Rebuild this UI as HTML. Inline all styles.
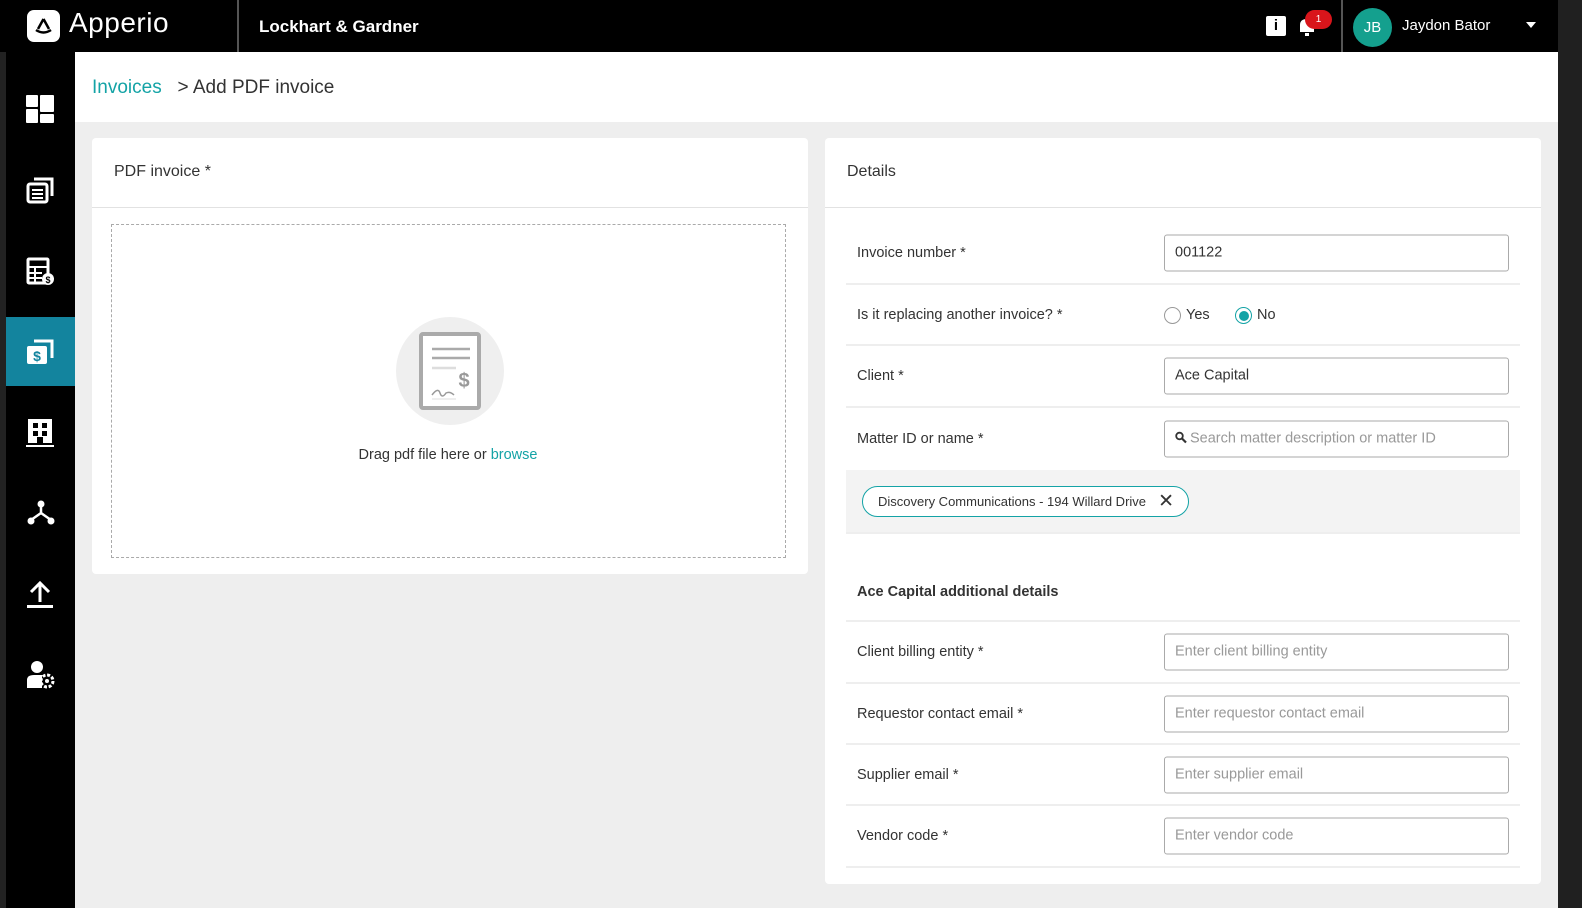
<!DOCTYPE html>
<html><head><style>
*{box-sizing:border-box;margin:0;padding:0}
body{width:1582px;height:908px;overflow:hidden;background:#202020;font-family:"Liberation Sans",sans-serif;color:#333;position:relative}
.top{position:absolute;left:0;top:0;width:1558px;height:52px;background:#000}
.side{position:absolute;left:6px;top:52px;width:69px;height:856px;background:#000}
.lstrip{position:absolute;left:0;top:0;width:6px;height:908px;background:#222}
.main{position:absolute;left:75px;top:52px;width:1483px;height:856px;background:#eee}
.hdr{position:absolute;left:0;top:0;width:1483px;height:70px;background:#fff}
.card{position:absolute;background:#fff;border-radius:4px}
.ch{height:70px;border-bottom:1px solid #e2e2e2;padding:25px 22px;font-size:16px;color:#333}
.row{position:absolute;left:21px;width:674px;border-bottom:2px solid #eee;font-size:14.5px;color:#333}
.row .l{position:absolute;left:11px;top:50%;transform:translateY(-50%)}
.inp{position:absolute;left:318px;width:345px;height:37px;border:1px solid #aaa;border-radius:3px;top:50%;transform:translateY(-50%);padding:9px 10px;font-size:14.5px;color:#333}
.ph{color:#999}
.ic{position:absolute;left:20px}
</style></head><body>
<div class="lstrip"></div>
<div class="top">
 <div style="position:absolute;left:27px;top:10px;width:33px;height:32px;background:#fff;border-radius:7px">
  <svg width="33" height="32" viewBox="0 0 33 32"><path d="M16.5 9 L11 19 M16.5 9 L22 19" stroke="#000" stroke-width="2.5" fill="none"/><path d="M9 20 Q16.5 25 24 20" stroke="#000" stroke-width="2.5" fill="none"/></svg>
 </div>
 <div style="position:absolute;left:69px;top:7px;color:#fff;font-size:28px;letter-spacing:0.5px">Apperio</div>
 <div style="position:absolute;left:237px;top:0;width:2px;height:52px;background:#555"></div>
 <div style="position:absolute;left:259px;top:17px;color:#fff;font-size:17px;font-weight:bold">Lockhart &amp; Gardner</div>
 <div style="position:absolute;left:1266px;top:16px;width:20px;height:20px;background:#fff;border-radius:2px;color:#000;font-weight:bold;font-size:15px;text-align:center;line-height:20px">i</div>
 <svg style="position:absolute;left:1297px;top:16px" width="20" height="22" viewBox="0 0 20 22"><path d="M3 16 L3 9 Q3 3 10 3 Q17 3 17 9 L17 16 Z" fill="#fff"/><rect x="8" y="17" width="4" height="3" fill="#fff"/></svg>
 <div style="position:absolute;left:1305px;top:10px;width:27px;height:19px;border-radius:10px;background:#d9151b;color:#fff;font-size:10px;text-align:center;line-height:19px">1</div>
 <div style="position:absolute;left:1341px;top:0;width:2px;height:52px;background:#555"></div>
 <div style="position:absolute;left:1353px;top:8px;width:39px;height:39px;border-radius:50%;background:#14a08e;color:#fff;font-size:15px;text-align:center;line-height:39px">JB</div>
 <div style="position:absolute;left:1402px;top:17px;color:#fff;font-size:15px">Jaydon Bator</div>
 <div style="position:absolute;left:1526px;top:22px;border-left:5px solid transparent;border-right:5px solid transparent;border-top:6px solid #fff"></div>
</div>
<div class="side">
 <svg class="ic" style="top:43px" width="28" height="28" viewBox="0 0 28 28"><rect x="0" y="0" width="12" height="12" rx="1" fill="#fff"/><rect x="14" y="0" width="14" height="17" rx="1" fill="#fff"/><rect x="0" y="14" width="12" height="14" rx="1" fill="#fff"/><rect x="14" y="19" width="14" height="9" rx="1" fill="#fff"/></svg>
 <svg class="ic" style="top:124px" width="28" height="28" viewBox="0 0 28 28"><path d="M8 3 H26 V20" stroke="#fff" stroke-width="3" fill="none"/><rect x="2" y="8" width="19" height="18" rx="2" fill="none" stroke="#fff" stroke-width="3"/><path d="M6 14H17M6 18H17M6 22H17" stroke="#fff" stroke-width="2"/></svg>
 <svg class="ic" style="top:205px" width="30" height="30" viewBox="0 0 30 30"><rect x="2" y="2" width="20" height="24" rx="1" fill="none" stroke="#fff" stroke-width="3"/><path d="M2 10H22M2 16H16M2 21H16M9 10V26" stroke="#fff" stroke-width="2"/><circle cx="22" cy="22" r="6" fill="#fff"/><text x="22" y="26" font-size="9" font-weight="bold" text-anchor="middle" fill="#000">$</text></svg>
 <div style="position:absolute;left:0;top:265px;width:69px;height:69px;background:#13849e"></div>
 <svg class="ic" style="top:286px" width="28" height="28" viewBox="0 0 28 28"><path d="M8 3 H26 V20" stroke="#fff" stroke-width="3" fill="none"/><rect x="1" y="8" width="20" height="18" rx="2" fill="#fff"/><text x="11" y="23" font-size="14" font-weight="bold" text-anchor="middle" fill="#13849e">$</text></svg>
 <svg class="ic" style="top:366px" width="28" height="30" viewBox="0 0 28 30"><rect x="2" y="1" width="24" height="24" fill="#fff"/><rect x="7" y="5" width="5" height="5" fill="#000"/><rect x="16" y="5" width="5" height="5" fill="#000"/><rect x="7" y="13" width="5" height="5" fill="#000"/><rect x="16" y="13" width="5" height="5" fill="#000"/><rect x="11" y="19" width="6" height="6" fill="#000"/><rect x="0" y="27" width="28" height="2" fill="#fff"/></svg>
 <svg class="ic" style="top:447px" width="30" height="30" viewBox="0 0 30 30"><path d="M15 6 V14 L5 21 M15 14 L25 21" stroke="#fff" stroke-width="2.5" fill="none"/><circle cx="15" cy="5" r="3.5" fill="#fff"/><circle cx="5" cy="22" r="3.5" fill="#fff"/><circle cx="25" cy="22" r="3.5" fill="#fff"/></svg>
 <svg class="ic" style="top:528px" width="28" height="30" viewBox="0 0 28 30"><path d="M14 22 V4 M5 12 L14 3 L23 12" stroke="#fff" stroke-width="3" fill="none"/><rect x="1" y="25" width="26" height="3" fill="#fff"/></svg>
 <svg class="ic" style="top:608px" width="30" height="30" viewBox="0 0 30 30"><circle cx="11" cy="7" r="6" fill="#fff"/><path d="M1 28 V20 Q1 15 8 15 H16 V28 Z" fill="#fff"/><circle cx="21" cy="21" r="6" fill="none" stroke="#fff" stroke-width="3" stroke-dasharray="3 1.7"/><circle cx="21" cy="21" r="2" fill="#fff"/></svg>
</div>
<div class="main">
 <div class="hdr"><div style="position:absolute;left:17px;top:25px;font-size:19px"><span style="color:#14a3a6">Invoices</span><span style="color:#333">&nbsp;&nbsp; &gt; Add PDF invoice</span></div></div>
 <div class="card" style="left:17px;top:86px;width:716px;height:436px">
  <div class="ch">PDF invoice *</div>
  <div style="position:absolute;left:19px;top:86px;width:675px;height:334px;border:1.5px dashed #aaa">
   <div style="position:absolute;left:284px;top:92px;width:108px;height:108px;border-radius:50%;background:#efefef"></div>
   <svg style="position:absolute;left:306px;top:106px" width="64" height="80" viewBox="0 0 64 80"><rect x="3" y="3" width="58" height="74" rx="2" fill="#fff" stroke="#aaa" stroke-width="4"/><path d="M14 18H52M14 27H52" stroke="#aaa" stroke-width="2.5"/><path d="M14 37H38" stroke="#ddd" stroke-width="2.5"/><text x="46" y="56" font-size="20" font-weight="bold" text-anchor="middle" fill="#999">$</text><path d="M14 64 Q20 56 22 62 Q24 68 28 62 Q32 60 36 64" stroke="#999" stroke-width="1.5" fill="none"/><path d="M14 68H38" stroke="#ddd" stroke-width="1"/></svg>
   <div style="position:absolute;left:0;width:672px;top:222px;text-align:center;font-size:14.5px">Drag pdf file here or <span style="color:#14a3a6">browse</span></div>
  </div>
 </div>
 <div class="card" style="left:750px;top:86px;width:716px;height:746px">
  <div class="ch">Details</div>
  <div class="row" style="top:84px;height:63px"><span class="l">Invoice number *</span><div class="inp">001122</div></div>
  <div class="row" style="top:147px;height:61px"><span class="l">Is it replacing another invoice? *</span>
   <div style="position:absolute;left:318px;top:22px;width:17px;height:17px;border:1px solid #999;border-radius:50%"></div>
   <span style="position:absolute;left:340px;top:22px">Yes</span>
   <div style="position:absolute;left:389px;top:22px;width:17px;height:17px;border:1.5px solid #14a3a6;border-radius:50%;padding:2.5px"><div style="width:100%;height:100%;border-radius:50%;background:#14a3a6"></div></div>
   <span style="position:absolute;left:411px;top:22px">No</span></div>
  <div class="row" style="top:208px;height:62px"><span class="l">Client *</span><div class="inp">Ace Capital</div></div>
  <div class="row" style="top:270px;height:62px;border:none"><span class="l">Matter ID or name *</span><div class="inp ph"><svg width="12" height="12" viewBox="0 0 12 12" style="vertical-align:-1px;margin-right:3px"><circle cx="4.5" cy="4.5" r="3.3" stroke="#333" stroke-width="1.8" fill="none"/><path d="M7 7L11 11" stroke="#333" stroke-width="2.2"/></svg>Search matter description or matter ID</div></div>
  <div style="position:absolute;left:21px;top:332px;width:674px;height:62px;background:#f3f3f3">
   <div style="position:absolute;left:16px;top:16px;width:327px;height:31px;border:1.5px solid #14a3a6;border-radius:16px;background:#fff;font-size:13px;padding:7px 15px">Discovery Communications - 194 Willard Drive<span style="position:absolute;right:14px;top:3px;font-size:19px">✕</span></div>
  </div>
  <div class="row" style="top:394px;height:2px"></div>
  <div class="row" style="top:396px;height:88px"><span class="l" style="top:58px;font-weight:bold">Ace Capital additional details</span></div>
  <div class="row" style="top:484px;height:62px"><span class="l">Client billing entity *</span><div class="inp ph">Enter client billing entity</div></div>
  <div class="row" style="top:546px;height:61px"><span class="l">Requestor contact email *</span><div class="inp ph">Enter requestor contact email</div></div>
  <div class="row" style="top:607px;height:61px"><span class="l">Supplier email *</span><div class="inp ph">Enter supplier email</div></div>
  <div class="row" style="top:668px;height:62px"><span class="l">Vendor code *</span><div class="inp ph">Enter vendor code</div></div>
 </div>
</div>
</body></html>
